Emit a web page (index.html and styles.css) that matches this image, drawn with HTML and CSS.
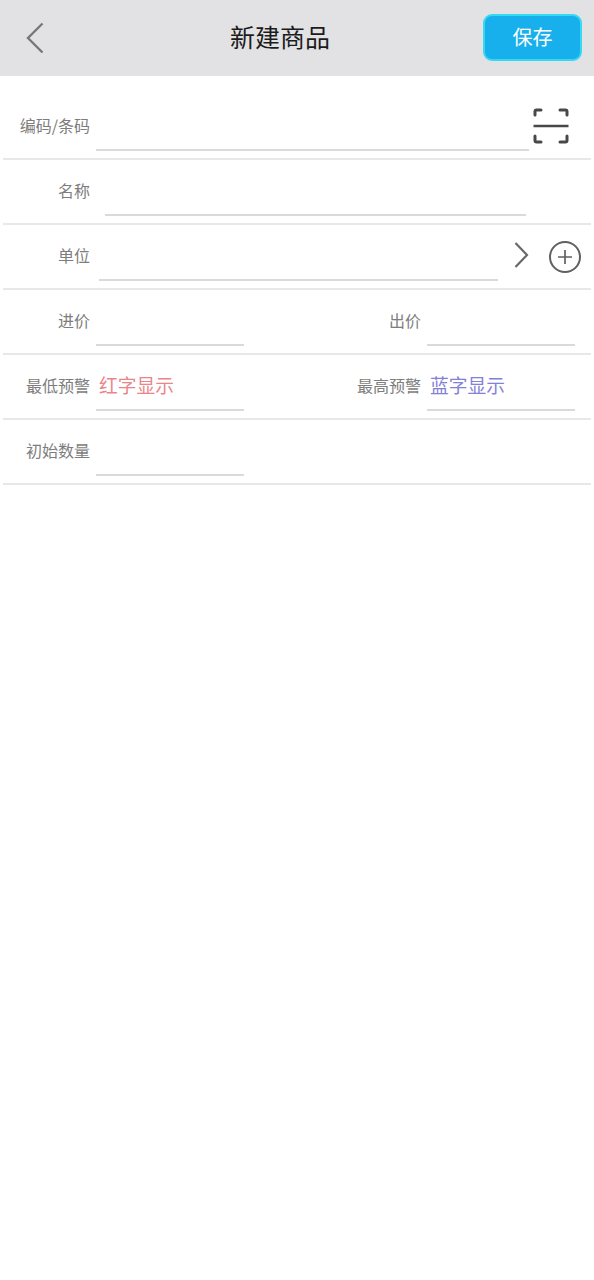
FILE: index.html
```html
<!DOCTYPE html>
<html lang="zh">
<head>
<meta charset="utf-8">
<title>新建商品</title>
<link rel="stylesheet" href="styles.css">
</head>
<body>
<header class="topbar">
  <svg class="back" width="20" height="32" viewBox="0 0 20 32"><path d="M17.500 1.500 3 16 17.500 30.500" fill="none" stroke="#77787a" stroke-width="2.400"/></svg>
  <h1 class="title">新建商品</h1>
  <button class="save">保存</button>
</header>
<main class="form">
  <div class="row">
    <span class="label">编码/条码</span>
    <div class="field code"></div>
    <svg class="scan" width="36" height="36" viewBox="0 0 36 36" fill="none" stroke="#47484a" stroke-width="3" stroke-linecap="round" stroke-linejoin="round">
      <path d="M2 7V3.500Q2 2 3.500 2H8M27 2h5.500Q34 2 34 3.500V7M2 28v4.500Q2 34 3.500 34H8M27 34h5.500Q34 34 34 32.500V28"/>
      <path d="M0.500 18H35.500" stroke-width="2.400" stroke-linecap="butt"/>
    </svg>
  </div>
  <div class="row">
    <span class="label">名称</span>
    <div class="field name"></div>
  </div>
  <div class="row">
    <span class="label">单位</span>
    <div class="field unit"></div>
    <svg class="chevron" width="16" height="26" viewBox="0 0 16 26"><path d="M2.500 1 14 13 2.500 25" fill="none" stroke="#68696b" stroke-width="2.200"/></svg>
    <svg class="plus" width="34" height="34" viewBox="0 0 34 34" fill="none" stroke="#5f6062">
      <circle cx="17" cy="17" r="15" stroke-width="2"/>
      <path d="M17 10V24M10 17H24" stroke-width="1.700"/>
    </svg>
  </div>
  <div class="row">
    <div class="cell"><span class="label">进价</span><div class="field half"></div></div>
    <div class="cell"><span class="label">出价</span><div class="field half"></div></div>
  </div>
  <div class="row">
    <div class="cell"><span class="label">最低预警</span><div class="field half red">红字显示</div></div>
    <div class="cell"><span class="label">最高预警</span><div class="field half blue">蓝字显示</div></div>
  </div>
  <div class="row">
    <div class="cell"><span class="label">初始数量</span><div class="field half"></div></div>
  </div>
</main>
</body>
</html>
```
FILE: styles.css
```css
* { box-sizing: border-box; }
html, body { margin: 0; background: #fff; }
body { font-family: "Noto Sans CJK SC", "Liberation Sans", sans-serif; }

.topbar {
  height: 76px;
  background: #e2e2e4;
  display: flex;
  align-items: center;
  padding: 0 12px 0 25px;
}
.back { display: block; flex: none; }
.title {
  margin: 0 0 4px 185px;
  font-size: 25px;
  font-weight: 400;
  line-height: 36px;
  color: #1c1c1c;
  white-space: nowrap;
}
.save {
  margin: 0 0 1px auto;
  width: 99px;
  height: 47px;
  border: 2px solid #37d9f2;
  border-radius: 9px;
  background: #18b0ec;
  color: #fff;
  font: inherit;
  font-size: 20px;
  padding: 0 0 2px;
}

.form { padding: 19px 3px 0; }
.row {
  height: 65px;
  border-bottom: 2px solid #e8e8e9;
  display: flex;
  align-items: flex-start;
}
.label {
  width: 87px;
  flex: none;
  height: 55px;
  line-height: 61px;
  text-align: right;
  font-size: 16px;
  color: #7d7d7d;
  white-space: nowrap;
}
.field {
  height: 56px;
  border-bottom: 2px solid #dadadb;
  flex: none;
  margin-left: 6px;
}
.code { width: 433px; }
.name { width: 421px; margin-left: 15px; }
.unit { width: 399px; margin-left: 9px; }
.scan { margin: 13px 0 0 4px; }
.chevron { margin: 17px 0 0 15px; }
.plus { margin: 15px 0 0 19px; }

.cell { display: flex; width: 241px; flex: none; }
.cell + .cell { margin-left: 90px; }
.half {
  width: 148px;
  padding-left: 3px;
  font-size: 18.750px;
  line-height: 59px;
  white-space: nowrap;
}
.red { color: #ea8589; }
.blue { color: #8480d8; }
```
